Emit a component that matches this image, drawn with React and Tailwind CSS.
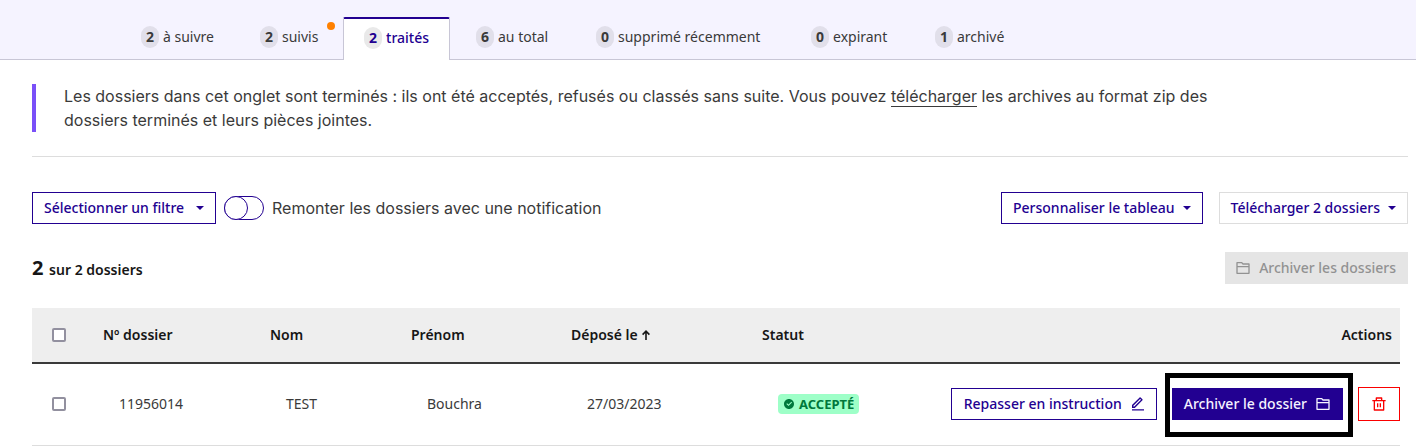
import {
  RiCheckboxCircleFill,
  RiDeleteBinLine,
  RiEditLine,
  RiFolder2Line,
} from 'react-icons/ri';

const tabs = [
  { count: 2, label: 'à suivre', width: 'w-[113px]' },
  { count: 2, label: 'suivis', width: 'w-[97px]', notify: true },
  { count: 2, label: 'traités', width: 'w-[107px]', active: true },
  { count: 6, label: 'au total', width: 'w-[114px]' },
  { count: 0, label: 'supprimé récemment', width: 'w-[209px]' },
  { count: 0, label: 'expirant', width: 'w-[118px]' },
  { count: 1, label: 'archivé', width: 'w-[113px]' },
];

const columns = [
  { label: 'Nº dossier', width: 'w-[167px]' },
  { label: 'Nom', width: 'w-[141px]' },
  { label: 'Prénom', width: 'w-[160px]' },
  { label: 'Déposé le', width: 'w-[191px]', sorted: true },
  { label: 'Statut', width: 'w-[160px]' },
];

function Tab({ count, label, width, active, notify }) {
  return (
    <li className={`relative flex ${width}`}>
      <a
        href="#"
        aria-current={active ? 'page' : undefined}
        className={
          active
            ? 'flex flex-1 items-center gap-1 whitespace-nowrap border-x border-t-2 border-x-[#c8c6d6] border-t-[#220091] rounded-t-xs bg-white pb-1 pl-5 font-medium text-[#220091]'
            : 'flex flex-1 items-center gap-1 whitespace-nowrap pb-[3px] pl-5 text-[#3a3a3a]'
        }
      >
        <span
          className={`flex h-[22px] min-w-[18px] items-center justify-center rounded-full px-[5px] font-bold ${
            active ? 'bg-[#e9e9e9]' : 'bg-[#e1dfea]'
          }`}
        >
          {count}
        </span>
        {label}
      </a>
      {notify && (
        <span className="absolute right-0.5 top-[5px] size-2 rounded-full bg-[#ff8000]" />
      )}
    </li>
  );
}

function Caret() {
  return (
    <svg viewBox="0 0 8 4" className="h-1 w-2 fill-current" aria-hidden="true">
      <path d="M0 0h8L4 4z" />
    </svg>
  );
}

function SortArrow() {
  return (
    <svg
      viewBox="0 0 8 10"
      className="h-[10px] w-2 fill-none stroke-current stroke-[1.6]"
      aria-hidden="true"
    >
      <path d="M4 10V1.2M.6 4.6 4 1.2l3.4 3.4" />
    </svg>
  );
}

function MenuButton({ children, light }) {
  return (
    <button
      type="button"
      className={`flex h-8 min-w-[184px] items-center justify-between gap-2 whitespace-nowrap border px-[11px] font-medium text-[#220091] ${
        light ? 'border-[#dddddd]' : 'border-[#220091]'
      }`}
    >
      {children}
      <Caret />
    </button>
  );
}

function Check({ label }) {
  return (
    <input
      type="checkbox"
      aria-label={label}
      className="ml-5 block size-[14px] appearance-none rounded-[2px] border-2 border-[#92909f] bg-white"
    />
  );
}

export default function App() {
  return (
    <div className="bg-white font-['Noto_Sans',sans-serif] text-sm text-[#3a3a3a]">
      <nav
        aria-label="Dossiers"
        className="bg-[#f5f3ff] pt-[17px] shadow-[inset_0_-1px_0_#c8c6d6]"
      >
        <ul className="flex h-[43px] items-stretch gap-1.5 pl-[121px]">
          {tabs.map((tab) => (
            <Tab key={tab.label} {...tab} />
          ))}
        </ul>
      </nav>

      <main className="pl-8 pr-2 pt-6">
        <div className="border-l-4 border-[#7a50f8] pl-7">
          <p className="max-w-[1160px] font-['Inter',sans-serif] text-base leading-6">
            Les dossiers dans cet onglet sont terminés : ils ont été acceptés, refusés ou classés
            sans suite. Vous pouvez{' '}
            <a href="#" className="border-b border-[#3a3a3a]">
              télécharger
            </a>{' '}
            les archives au format zip des <br />
            dossiers terminés et leurs pièces jointes.
          </p>
        </div>

        <hr className="mt-6 border-[#dddddd]" />

        <div className="mt-[35px] flex items-center justify-between">
          <div className="flex items-center gap-2">
            <MenuButton>Sélectionner un filtre</MenuButton>
            <label className="flex items-center gap-2 font-['Inter',sans-serif] text-base">
              <input type="checkbox" role="switch" className="peer sr-only" />
              <span className="flex h-6 w-10 rounded-full border border-[#220091] peer-checked:justify-end">
                <span className="-m-px size-6 rounded-full border border-[#220091] bg-white" />
              </span>
              Remonter les dossiers avec une notification
            </label>
          </div>
          <div className="flex gap-4">
            <MenuButton>Personnaliser le tableau</MenuButton>
            <MenuButton light>Télécharger 2 dossiers</MenuButton>
          </div>
        </div>

        <div className="mt-7 flex items-center justify-between">
          <h2 className="text-sm font-semibold text-[#161616]">
            <span className="mr-0.5 text-xl font-bold leading-8">2</span> sur 2 dossiers
          </h2>
          <button
            type="button"
            disabled
            className="flex h-8 items-center gap-2 bg-[#e5e5e5] pl-[10px] pr-3 font-medium text-[#929292]"
          >
            <RiFolder2Line className="size-4" />
            Archiver les dossiers
          </button>
        </div>

        <div className="mt-6 pr-2">
          <table className="w-full table-fixed border-collapse text-left">
            <thead>
              <tr className="h-[55px] border-b-2 border-[#3a3a3a] bg-[#eeeeee] text-[#161616]">
                <th className="w-[55px] p-0">
                  <Check label="Tout sélectionner" />
                </th>
                {columns.map(({ label, width, sorted }) => (
                  <th key={label} className={`${width} py-0 pl-4 pr-0 font-semibold`}>
                    <span className="flex items-center gap-1">
                      {label}
                      {sorted && <SortArrow />}
                    </span>
                  </th>
                ))}
                <th className="py-0 pl-0 pr-2 text-right font-semibold">Actions</th>
              </tr>
            </thead>
            <tbody>
              <tr className="h-[82px] border-b border-[#dddddd]">
                <td className="p-0">
                  <Check label="Sélectionner le dossier 11956014" />
                </td>
                <td className="py-0 pl-8 pr-0">11956014</td>
                <td className="py-0 pl-8 pr-0">TEST</td>
                <td className="py-0 pl-8 pr-0">Bouchra</td>
                <td className="py-0 pl-8 pr-0">27/03/2023</td>
                <td className="py-0 pl-8 pr-0">
                  <span className="flex h-5 w-fit items-center gap-1 whitespace-nowrap rounded bg-[#9effc8] px-[5px] text-[13px] font-bold text-[#00783c]">
                    <RiCheckboxCircleFill className="size-3" />
                    ACCEPTÉ
                  </span>
                </td>
                <td className="p-0">
                  <div className="flex items-center justify-end gap-[15px] whitespace-nowrap font-medium">
                    <button
                      type="button"
                      className="flex h-8 items-center gap-2 border border-[#220091] pl-3 pr-[10px] text-[#220091]"
                    >
                      Repasser en instruction
                      <RiEditLine className="size-4" />
                    </button>
                    <div className="relative">
                      <button
                        type="button"
                        className="flex h-8 items-center gap-2 bg-[#220091] pl-3 pr-3 text-[#f5f3ff]"
                      >
                        Archiver le dossier
                        <RiFolder2Line className="size-4" />
                      </button>
                      <span className="pointer-events-none absolute -bottom-[17px] -left-[7px] -right-[10px] -top-[15px] border-[5px] border-black" />
                    </div>
                    <button
                      type="button"
                      aria-label="Supprimer le dossier"
                      className="flex h-[34px] w-[42px] items-center justify-center border border-[#fa0000] text-[#fa0000]"
                    >
                      <RiDeleteBinLine className="size-4" />
                    </button>
                  </div>
                </td>
              </tr>
            </tbody>
          </table>
        </div>
      </main>
    </div>
  );
}
